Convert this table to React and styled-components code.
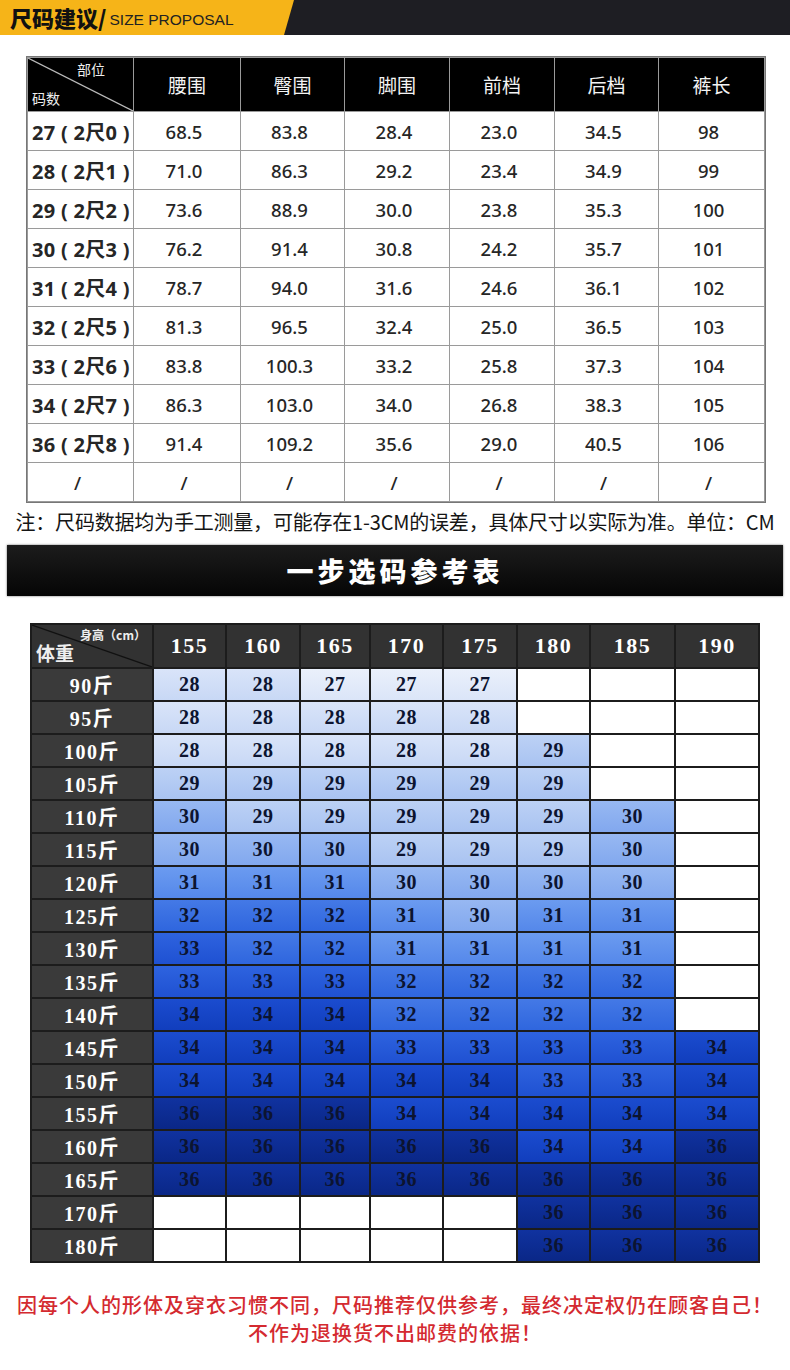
import React from "react";
import styled, { createGlobalStyle } from "styled-components";

const GlobalStyle = createGlobalStyle`
  body {
    margin: 0;
    background: #fff;
    font-family: "Noto Sans", "Noto Sans CJK SC", sans-serif;
  }
`;

const sizeHeads = ["腰围", "臀围", "脚围", "前档", "后档", "裤长"];

const sizeRows = [
  ["27 ( 2尺0 )", "68.5", "83.8", "28.4", "23.0", "34.5", "98"],
  ["28 ( 2尺1 )", "71.0", "86.3", "29.2", "23.4", "34.9", "99"],
  ["29 ( 2尺2 )", "73.6", "88.9", "30.0", "23.8", "35.3", "100"],
  ["30 ( 2尺3 )", "76.2", "91.4", "30.8", "24.2", "35.7", "101"],
  ["31 ( 2尺4 )", "78.7", "94.0", "31.6", "24.6", "36.1", "102"],
  ["32 ( 2尺5 )", "81.3", "96.5", "32.4", "25.0", "36.5", "103"],
  ["33 ( 2尺6 )", "83.8", "100.3", "33.2", "25.8", "37.3", "104"],
  ["34 ( 2尺7 )", "86.3", "103.0", "34.0", "26.8", "38.3", "105"],
  ["36 ( 2尺8 )", "91.4", "109.2", "35.6", "29.0", "40.5", "106"],
  ["/", "/", "/", "/", "/", "/", "/"],
];

const heights = ["155", "160", "165", "170", "175", "180", "185", "190"];

const pickRows = [
  ["90斤", [28, 28, 27, 27, 27, 0, 0, 0]],
  ["95斤", [28, 28, 28, 28, 28, 0, 0, 0]],
  ["100斤", [28, 28, 28, 28, 28, 29, 0, 0]],
  ["105斤", [29, 29, 29, 29, 29, 29, 0, 0]],
  ["110斤", [30, 29, 29, 29, 29, 29, 30, 0]],
  ["115斤", [30, 30, 30, 29, 29, 29, 30, 0]],
  ["120斤", [31, 31, 31, 30, 30, 30, 30, 0]],
  ["125斤", [32, 32, 32, 31, 30, 31, 31, 0]],
  ["130斤", [33, 32, 32, 31, 31, 31, 31, 0]],
  ["135斤", [33, 33, 33, 32, 32, 32, 32, 0]],
  ["140斤", [34, 34, 34, 32, 32, 32, 32, 0]],
  ["145斤", [34, 34, 34, 33, 33, 33, 33, 34]],
  ["150斤", [34, 34, 34, 34, 34, 33, 33, 34]],
  ["155斤", [36, 36, 36, 34, 34, 34, 34, 34]],
  ["160斤", [36, 36, 36, 36, 36, 34, 34, 36]],
  ["165斤", [36, 36, 36, 36, 36, 36, 36, 36]],
  ["170斤", [0, 0, 0, 0, 0, 36, 36, 36]],
  ["180斤", [0, 0, 0, 0, 0, 36, 36, 36]],
];

const tones = {
  27: ["#eaf0fb", "#dbe5f8"],
  28: ["#d9e4f9", "#c8d8f5"],
  29: ["#bcd1f5", "#a9c3f1"],
  30: ["#97b8f2", "#82a8ee"],
  31: ["#6b9bf0", "#5588ea"],
  32: ["#4479e6", "#2f66de"],
  33: ["#2e63df", "#1f51d2"],
  34: ["#1b4ccf", "#113ebd"],
  36: ["#10329f", "#0a2787"],
};

const Page = styled.div`
  width: 790px;
  padding-bottom: 24px;
`;

const TopBar = styled.div`
  height: 35px;
  display: flex;
  background: #1e1e23;
`;

const TitleTab = styled.div`
  width: 294px;
  display: flex;
  align-items: flex-end;
  gap: 3px;
  padding: 0 0 5px 10px;
  box-sizing: border-box;
  background: #f6b418;
  clip-path: polygon(0 0, 100% 0, calc(100% - 10px) 100%, 0 100%);
`;

const TitleCn = styled.span`
  font-family: "Noto Sans CJK SC", sans-serif;
  font-weight: 900;
  font-size: 22px;
  line-height: 26px;
  color: #111;
`;

const TitleEn = styled.span`
  font-family: "Liberation Sans", Arial, sans-serif;
  font-size: 15.5px;
  line-height: 20px;
  color: #222;
`;

const SizeTable = styled.div`
  margin: 22px 0 0 27px;
  width: 738px;
  display: grid;
  grid-template-columns: 105px 106px 103px 104px 104px 103px 105px;
  grid-template-rows: 53px repeat(10, 38px);
  gap: 1px;
  padding: 1px;
  box-sizing: border-box;
  background: #9a9a9a;
  box-shadow: 0 0 0 1px #777;
`;

const SizeCell = styled.div`
  display: flex;
  align-items: center;
  justify-content: ${(p) => (p.$first ? "flex-start" : "center")};
  padding-left: ${(p) => (p.$first ? "4px" : "0")};
  padding-right: ${(p) => (p.$first || p.$head ? "0" : "6px")};
  background: ${(p) => (p.$head ? "#000" : "#fff")};
  color: ${(p) => (p.$head ? "#f4f4f4" : "#262626")};
  font-family: "Noto Sans", "Noto Sans CJK SC", sans-serif;
  font-size: ${(p) => (p.$head ? "19px" : p.$first ? "20px" : "18.5px")};
  font-weight: ${(p) => (p.$head ? 400 : p.$first ? 700 : 500)};
  letter-spacing: ${(p) => (p.$first ? "0.3px" : "0")};
  white-space: pre;
`;

const Corner = styled.div`
  position: relative;
  display: flex;
  flex-direction: column;
  justify-content: space-between;
  padding: 3px 6px 4px 4px;
  color: #eee;
  font-family: "Noto Sans CJK SC", sans-serif;
  font-size: ${(p) => p.$size || "14px"};
  font-weight: ${(p) => p.$weight || 400};
  line-height: 1.2;
  background: ${(p) => p.$bg || "#000"};
`;

const CornerTop = styled.span`
  align-self: flex-end;
  margin-right: ${(p) => p.$right || "22px"};
  font-size: ${(p) => p.$size || "inherit"};
  font-weight: ${(p) => p.$weight || "inherit"};
`;

const CornerBottom = styled.span`
  align-self: flex-start;
`;

const Diagonal = styled.svg`
  position: absolute;
  inset: 0;
  width: 100%;
  height: 100%;
`;

const Note = styled.div`
  margin-top: 8px;
  text-align: center;
  font-family: "Noto Sans CJK SC", sans-serif;
  font-size: 20px;
  line-height: 24px;
  color: #151515;
  letter-spacing: -0.2px;
`;

const Banner = styled.div`
  margin: 11px 7px 0;
  height: 51px;
  display: flex;
  align-items: center;
  justify-content: center;
  background: linear-gradient(#1c1c1c, #050505);
  box-shadow: 0 0 2px #666;
  color: #fff;
  font-family: "Noto Sans CJK SC", sans-serif;
  font-weight: 900;
  font-size: 27px;
  letter-spacing: 4px;
`;

const PickTable = styled.div`
  margin: 27px 0 0 30px;
  width: 730px;
  display: grid;
  grid-template-columns: 120px 71px 72px 68px 71px 72px 71px 83px 82px;
  grid-template-rows: 42px repeat(18, 31px);
  gap: 2px;
  padding: 2px;
  box-sizing: border-box;
  background: #1c1c1c;
`;

const ColHead = styled.div`
  display: flex;
  align-items: center;
  justify-content: center;
  background: #323232;
  color: #fff;
  font-family: "Liberation Serif", "DejaVu Serif", serif;
  font-weight: 700;
  font-size: 22px;
  letter-spacing: 1.5px;
`;

const RowHead = styled.div`
  display: flex;
  align-items: center;
  justify-content: center;
  background: #3a3a3a;
  color: #fff;
  font-family: "Liberation Serif", "Noto Sans CJK SC", serif;
  font-weight: 700;
  font-size: 20px;
  letter-spacing: 1.5px;
`;

const PickCell = styled.div`
  display: flex;
  align-items: center;
  justify-content: center;
  background: ${(p) =>
    p.$tone ? `linear-gradient(180deg, ${p.$tone[0]}, ${p.$tone[1]})` : "#fff"};
  color: #0c1430;
  font-family: "Liberation Serif", "DejaVu Serif", serif;
  font-weight: 700;
  font-size: 20px;
  letter-spacing: 0.5px;
`;

const Tip = styled.div`
  margin-top: 28px;
  text-align: center;
  font-family: "Noto Sans CJK SC", sans-serif;
  font-weight: 500;
  font-size: 20px;
  line-height: 28px;
  color: #d42a30;
  letter-spacing: 1px;
`;

function CornerLine({ color }) {
  return (
    <Diagonal viewBox="0 0 100 100" preserveAspectRatio="none">
      <line x1="0" y1="0" x2="100" y2="100" stroke={color} strokeWidth="1.2" vectorEffect="non-scaling-stroke" />
    </Diagonal>
  );
}

export default function App() {
  return (
    <Page>
      <GlobalStyle />
      <TopBar>
        <TitleTab>
          <TitleCn>尺码建议/</TitleCn>
          <TitleEn>SIZE PROPOSAL</TitleEn>
        </TitleTab>
      </TopBar>

      <SizeTable>
        <Corner>
          <CornerLine color="#bbb" />
          <CornerTop>部位</CornerTop>
          <CornerBottom>码数</CornerBottom>
        </Corner>
        {sizeHeads.map((h) => (
          <SizeCell key={h} $head>
            {h}
          </SizeCell>
        ))}
        {sizeRows.map((row, i) =>
          row.map((v, j) => (
            <SizeCell key={`${i}-${j}`} $first={j === 0 && v !== "/"}>
              {v}
            </SizeCell>
          ))
        )}
      </SizeTable>

      <Note>注：尺码数据均为手工测量，可能存在1-3CM的误差，具体尺寸以实际为准。单位：CM</Note>

      <Banner>一步选码参考表</Banner>

      <PickTable>
        <Corner $bg="#323232" $size="19px" $weight={700}>
          <CornerLine color="#111" />
          <CornerTop $size="12px" $right="0px">身高（cm）</CornerTop>
          <CornerBottom>体重</CornerBottom>
        </Corner>
        {heights.map((h) => (
          <ColHead key={h}>{h}</ColHead>
        ))}
        {pickRows.map(([w, vals]) => (
          <React.Fragment key={w}>
            <RowHead>{w}</RowHead>
            {vals.map((v, j) => (
              <PickCell key={j} $tone={v ? tones[v] : null}>
                {v || ""}
              </PickCell>
            ))}
          </React.Fragment>
        ))}
      </PickTable>

      <Tip>
        因每个人的形体及穿衣习惯不同，尺码推荐仅供参考，最终决定权仍在顾客自己！
        <br />
        不作为退换货不出邮费的依据！
      </Tip>
    </Page>
  );
}
